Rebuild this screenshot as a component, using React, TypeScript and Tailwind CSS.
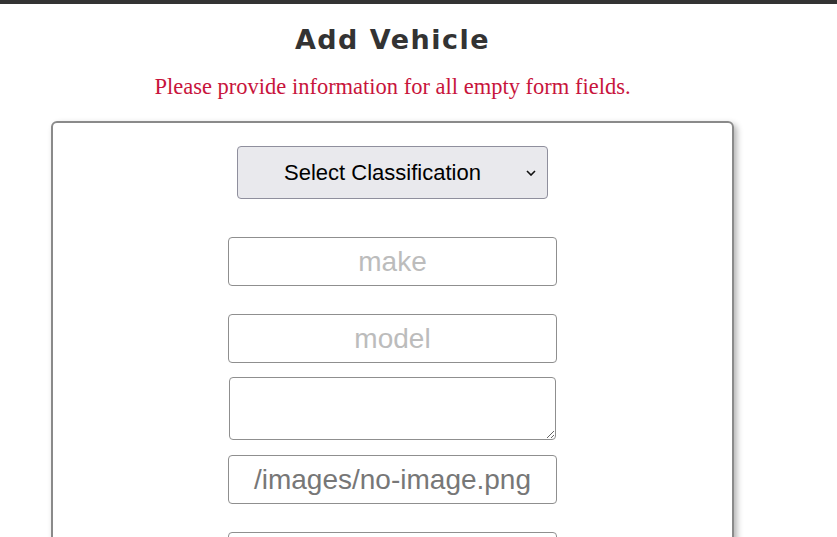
export default function App() {
  return (
    <div className="min-h-screen bg-white">
      <div className="h-1 bg-[#333333]" />
      <main className="ml-[51px] w-[683px]">
        <h1 className="mt-[17px] text-center text-[27px] leading-[38px] font-bold text-[#333333] font-['DejaVu_Sans',sans-serif] tracking-[1.5px]">
          Add Vehicle
        </h1>
        <p className="mt-[14px] text-center text-[22.5px] leading-[28px] text-[#c8143c] font-['Liberation_Serif',serif]">
          Please provide information for all empty form fields.
        </p>
        <form className="mt-[20px] flex flex-col items-center rounded-md border-2 border-[#8a8a8a] pt-[23px] pb-10 shadow-[3px_3px_6px_rgba(0,0,0,0.3)] font-['Liberation_Sans',sans-serif]">
          <div className="relative">
            <select
              defaultValue=""
              className="h-[53px] w-[311px] appearance-none rounded border border-[#8f8f9d] bg-[#e9e9ed] pl-[46px] pr-10 text-[22px] text-black outline-none"
            >
              <option value="" disabled>
                Select Classification
              </option>
            </select>
            <svg
              viewBox="0 0 10 6"
              className="pointer-events-none absolute right-[12px] top-[24px] h-[6px] w-[10px]"
            >
              <path d="M1 1l4 4 4-4" fill="none" stroke="#111" strokeWidth="1.6" />
            </svg>
          </div>
          <input
            placeholder="make"
            className="mt-[38px] h-[49px] w-[329px] rounded-sm border border-[#8f8f8f] text-center text-[28px] outline-none placeholder:text-[#bcbcbc]"
          />
          <input
            placeholder="model"
            className="mt-[28px] h-[49px] w-[329px] rounded-sm border border-[#8f8f8f] text-center text-[28px] outline-none placeholder:text-[#bcbcbc]"
          />
          <textarea className="mt-[14px] h-[63px] w-[327px] rounded-sm border border-[#8f8f8f] outline-none" />
          <input
            defaultValue="/images/no-image.png"
            className="mt-[15px] h-[49px] w-[329px] rounded-sm border border-[#8f8f8f] text-center text-[28px] text-[#777777] outline-none"
          />
          <input
            defaultValue="/images/no-image-tn.png"
            className="mt-[28px] h-[49px] w-[329px] rounded-sm border border-[#8f8f8f] text-center text-[28px] text-[#777777] outline-none"
          />
        </form>
      </main>
    </div>
  );
}
